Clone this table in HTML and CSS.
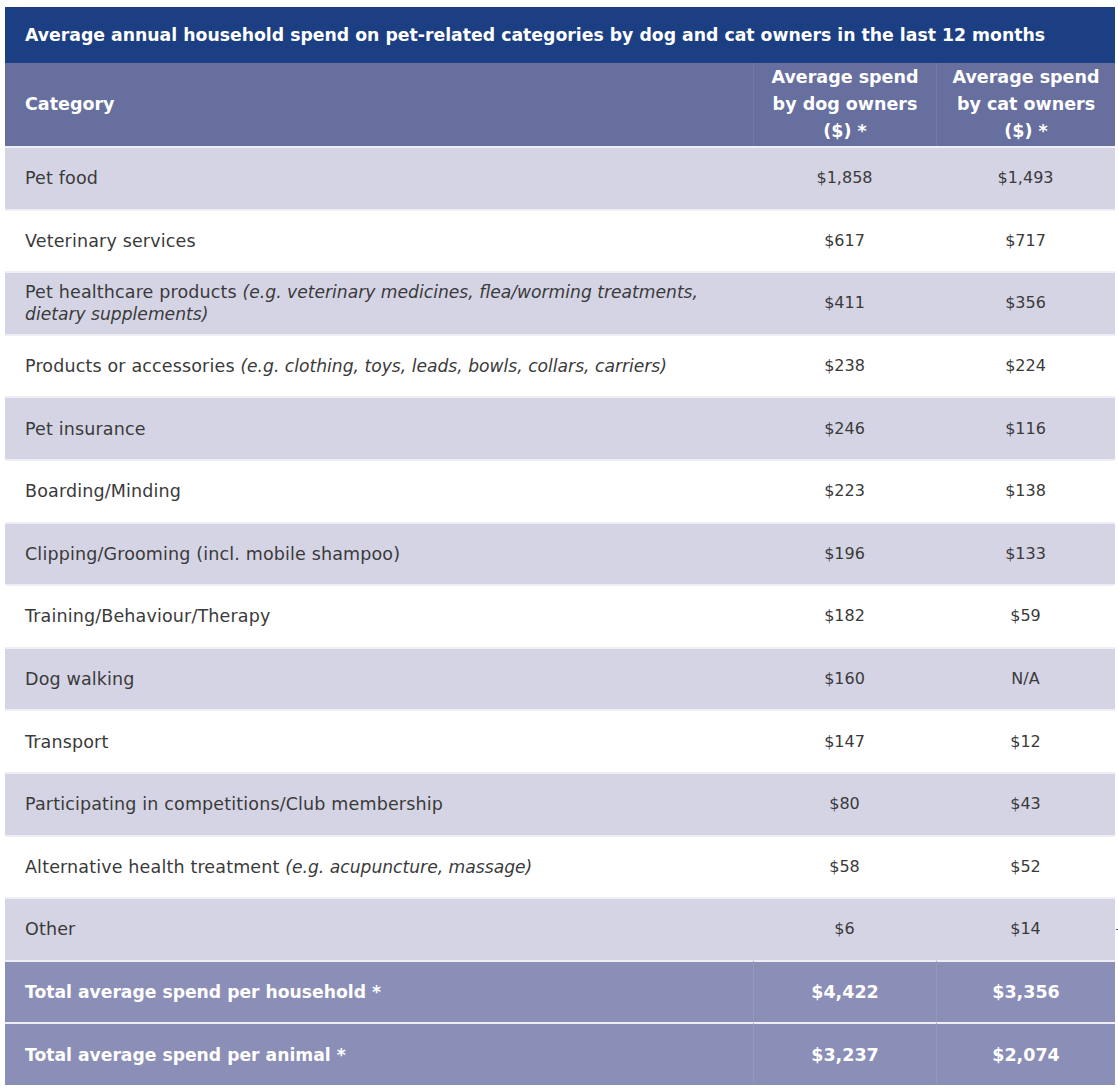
FILE: index.html
```html
<!DOCTYPE html>
<html lang="en">
<head>
  <meta charset="UTF-8" />
  <meta name="viewport" content="width=device-width, initial-scale=1.0" />
  <title>Pet spend</title>
  <link rel="stylesheet" href="styles.css">
</head>
<body>
  <div class="spend-table">
    <div class="title-bar">Average annual household spend on pet-related categories by dog and cat owners in the last 12 months</div>
    <table>
      <thead>
        <tr>
          <th class="cat">Category</th>
          <th>Average spend<br>by dog owners<br>($) *</th>
          <th>Average spend<br>by cat owners<br>($) *</th>
        </tr>
      </thead>
      <tbody>
        <tr class="shade">
          <td class="cat">Pet food</td>
          <td>$1,858</td>
          <td>$1,493</td>
        </tr>
        <tr>
          <td class="cat">Veterinary services</td>
          <td>$617</td>
          <td>$717</td>
        </tr>
        <tr class="shade">
          <td class="cat">Pet healthcare products <em>(e.g. veterinary medicines, flea/worming treatments,<br>dietary supplements)</em></td>
          <td>$411</td>
          <td>$356</td>
        </tr>
        <tr>
          <td class="cat">Products or accessories <em>(e.g. clothing, toys, leads, bowls, collars, carriers)</em></td>
          <td>$238</td>
          <td>$224</td>
        </tr>
        <tr class="shade">
          <td class="cat">Pet insurance</td>
          <td>$246</td>
          <td>$116</td>
        </tr>
        <tr>
          <td class="cat">Boarding/Minding</td>
          <td>$223</td>
          <td>$138</td>
        </tr>
        <tr class="shade">
          <td class="cat">Clipping/Grooming (incl. mobile shampoo)</td>
          <td>$196</td>
          <td>$133</td>
        </tr>
        <tr>
          <td class="cat">Training/Behaviour/Therapy</td>
          <td>$182</td>
          <td>$59</td>
        </tr>
        <tr class="shade">
          <td class="cat">Dog walking</td>
          <td>$160</td>
          <td>N/A</td>
        </tr>
        <tr>
          <td class="cat">Transport</td>
          <td>$147</td>
          <td>$12</td>
        </tr>
        <tr class="shade">
          <td class="cat">Participating in competitions/Club membership</td>
          <td>$80</td>
          <td>$43</td>
        </tr>
        <tr>
          <td class="cat">Alternative health treatment <em>(e.g. acupuncture, massage)</em></td>
          <td>$58</td>
          <td>$52</td>
        </tr>
        <tr class="shade">
          <td class="cat">Other</td>
          <td>$6</td>
          <td>$14<span class="tick"></span></td>
        </tr>
      </tbody>
      <tfoot>
        <tr>
          <td class="cat">Total average spend per household *</td>
          <td>$4,422</td>
          <td>$3,356</td>
        </tr>
        <tr>
          <td class="cat">Total average spend per animal *</td>
          <td>$3,237</td>
          <td>$2,074</td>
        </tr>
      </tfoot>
    </table>
  </div>
</body>
</html>
```

FILE: styles.css
```css
body {
  margin: 0;
  padding: 7px 3px 0 5px;
  background: white;
  font-family: "DejaVu Sans", Verdana, sans-serif;
  color: #3a3a3a;
}

.spend-table {
  width: 1110px;
}

.title-bar {
  background-color: #1c3f84;
  color: white;
  font-weight: bold;
  font-size: 17.3px;
  height: 56px;
  line-height: 56px;
  padding-left: 20px;
}

table {
  width: 100%;
  border-collapse: separate;
  border-spacing: 0;
  table-layout: fixed;
}

th, td {
  padding: 0;
  text-align: center;
  vertical-align: middle;
}

th.cat, td.cat {
  text-align: left;
  padding-left: 20px;
}

th {
  background-color: #676f9f;
  color: white;
  font-size: 17.5px;
  line-height: 27px;
  height: 83px;
}

th:first-child {
  width: 728px;
}

th:nth-child(2) {
  width: 182px;
}

td {
  font-size: 16px;
  line-height: 22px;
  height: 60.6px;
  border-top: 2px solid #eeeef5;
}

td.cat {
  font-size: 17.5px;
  letter-spacing: 0.15px;
}

tr.shade td {
  background-color: #d5d4e5;
}

em {
  font-style: italic;
  font-size: 0.98em;
  letter-spacing: 0;
}

tfoot td {
  background-color: #8b8eb6;
  color: white;
  font-weight: bold;
  font-size: 17.5px;
}

tfoot td.cat {
  font-size: 17.2px;
  letter-spacing: 0;
}

thead th + th, tfoot td + td {
  border-left: 1px solid rgba(255, 255, 255, 0.08);
}

td:last-child {
  position: relative;
}

.tick {
  position: absolute;
  right: -4px;
  top: 30px;
  width: 3px;
  height: 1px;
  background-color: #555a80;
}
```
